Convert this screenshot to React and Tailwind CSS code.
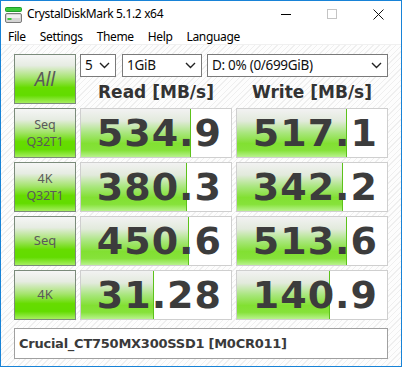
import React from "react";

const rows = [
  { l1: "Seq", l2: "Q32T1", read: "534.9", rw: 110, write: "517.1", ww: 110 },
  { l1: "4K", l2: "Q32T1", read: "380.3", rw: 106, write: "342.2", ww: 106 },
  { l1: "Seq", l2: null, read: "450.6", rw: 108, write: "513.6", ww: 110 },
  { l1: "4K", l2: null, read: "31.28", rw: 73, write: "140.9", ww: 93 },
];

function Chevron() {
  return (
    <svg width="11" height="7" viewBox="0 0 11 7" className="shrink-0">
      <polyline points="1,1 5.5,5.5 10,1" fill="none" stroke="#222" strokeWidth="1.4" />
    </svg>
  );
}

function Combo({ w, text }) {
  return (
    <div
      className="h-[23px] bg-white border border-[#7a7a7a] flex items-center justify-between pl-[4px] pr-[5px] text-[13.5px] text-[#111] font-['Noto_Sans',sans-serif] tracking-[-0.3px]"
      style={{ width: w }}
    >
      <span>{text}</span>
      <Chevron />
    </div>
  );
}

function LabelBtn({ children }) {
  return (
    <div className="w-[62px] h-[50px] shrink-0 border border-[#7b8b7b] bg-[linear-gradient(to_bottom,#f6f6f6_0%,#e6ece2_22%,#a4e46c_48%,#66dc00_68%,#62dc00_84%,#a6ee60_100%)] flex flex-col items-center justify-center text-[#5a5a5a] font-['Noto_Sans',sans-serif]">
      {children}
    </div>
  );
}

function ValueCell({ value, width }) {
  return (
    <div className="relative w-[152px] h-[50px] border border-[#cfcfcf] bg-white flex items-center justify-end pr-[9px]">
      <div
        className="absolute left-0 top-0 bottom-0 border-r border-[#5cc21a] bg-[linear-gradient(to_bottom,#f2f2f2_0%,#e2eadc_25%,#a8e67c_50%,#82e032_72%,#86e23a_86%,#b8f28e_100%)]"
        style={{ width }}
      />
      <span className="relative text-[38px] leading-none font-bold text-[#3c3c3c] font-['DejaVu_Sans',sans-serif] tracking-[1px]">
        {value}
      </span>
    </div>
  );
}

export default function App() {
  return (
    <div className="w-[402px] h-[367px] border border-[#1883d7] bg-white flex flex-col overflow-hidden select-none">
      {/* Title bar */}
      <div className="h-[26px] shrink-0 flex items-center bg-white">
        <svg width="17" height="16" viewBox="0 0 17 16" className="ml-[4px] mt-[1px]">
          <rect x="0.5" y="0.5" width="16" height="4" rx="1" fill="#3cc83c" stroke="#1e9e2a" />
          <rect x="0.5" y="6.5" width="16" height="9" rx="1.5" fill="#d4d4d4" stroke="#7a7a7a" />
          <rect x="2" y="8" width="13" height="3" fill="#efefef" />
          <rect x="2.5" y="11" width="4" height="2" fill="#3cc83c" />
        </svg>
        <span className="ml-[5px] text-[12px] text-black font-['Noto_Sans',sans-serif] tracking-[-0.35px]">
          CrystalDiskMark 5.1.2 x64
        </span>
        <div className="ml-auto flex items-center h-full">
          <div className="w-[46px] h-full flex items-center justify-center">
            <div className="w-[10px] h-[1px] bg-black" />
          </div>
          <div className="w-[46px] h-full flex items-center justify-center">
            <div className="w-[10px] h-[10px] border border-[#c4c4c4]" />
          </div>
          <div className="w-[46px] h-full flex items-center justify-center">
            <svg width="11" height="11" viewBox="0 0 11 11">
              <line x1="0.5" y1="0.5" x2="10.5" y2="10.5" stroke="#111" strokeWidth="1" />
              <line x1="10.5" y1="0.5" x2="0.5" y2="10.5" stroke="#111" strokeWidth="1" />
            </svg>
          </div>
        </div>
      </div>
      {/* Menu bar */}
      <div className="h-[18px] shrink-0 flex items-center pt-[2px] bg-white border-b border-[#f0f0f0] text-[12px] text-black font-['Noto_Sans',sans-serif] tracking-[-0.35px]">
        <span className="ml-[7px]">File</span>
        <span className="ml-[14px]">Settings</span>
        <span className="ml-[14px]">Theme</span>
        <span className="ml-[14px]">Help</span>
        <span className="ml-[14px]">Language</span>
      </div>
      {/* Client */}
      <div className="flex-1 pl-[13px] pt-[9px] bg-[repeating-linear-gradient(135deg,#fdfdfd_0px,#fdfdfd_3px,#efefef_3px,#efefef_4px)] flex flex-col gap-[4px]">
        {/* Top row */}
        <div className="flex gap-[4px]">
          <div className="w-[62px] h-[50px] shrink-0 border border-[#7b8b7b] bg-[linear-gradient(to_bottom,#f6f6f6_0%,#e6ece2_22%,#a4e46c_48%,#66dc00_68%,#62dc00_84%,#a6ee60_100%)] flex items-center justify-center text-[#5a5a5a] font-['Noto_Sans',sans-serif] italic text-[19px]">
            All
          </div>
          <div className="w-[308px] flex flex-col">
            <div className="flex">
              <Combo w={36} text="5" />
              <div className="ml-[6px]">
                <Combo w={80} text="1GiB" />
              </div>
              <div className="ml-[5px]">
                <Combo w={181} text="D: 0% (0/699GiB)" />
              </div>
            </div>
            <div className="flex pt-[5px] h-[27px] items-center text-[17px] font-bold text-[#333] font-['DejaVu_Sans',sans-serif]">
              <div className="w-[152px] text-center">Read [MB/s]</div>
              <div className="w-[4px]" />
              <div className="w-[152px] text-center">Write [MB/s]</div>
            </div>
          </div>
        </div>
        {rows.map((r, i) => (
          <div key={i} className="flex gap-[4px]">
            <LabelBtn>
              {r.l2 ? (
                <>
                  <span className="text-[12.5px] leading-[17px]">{r.l1}</span>
                  <span className="text-[12.5px] leading-[17px] tracking-[-0.2px]">{r.l2}</span>
                </>
              ) : (
                <span className="text-[13px]">{r.l1}</span>
              )}
            </LabelBtn>
            <ValueCell value={r.read} width={r.rw} />
            <ValueCell value={r.write} width={r.ww} />
          </div>
        ))}
        <div className="mt-[4px] w-[374px] h-[31px] border border-[#a0a0a0] bg-white flex items-center pl-[4px] text-[13px] font-bold text-[#3a3a3a] font-['DejaVu_Sans',sans-serif] tracking-[-0.25px]">
          Crucial_CT750MX300SSD1 [M0CR011]
        </div>
      </div>
    </div>
  );
}
